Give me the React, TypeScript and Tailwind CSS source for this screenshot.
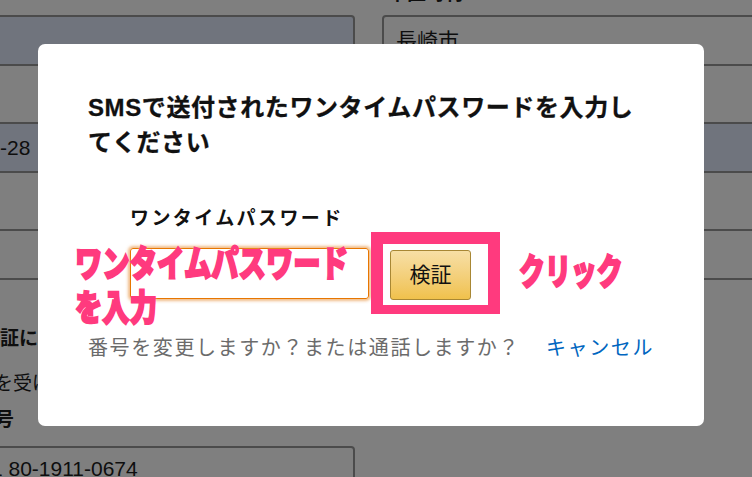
import React from 'react';

const font = '[font-family:"Liberation_Sans","Noto_Sans_CJK_JP",sans-serif]';

const Field = ({ fill, text, pad }: { fill: string; text?: string; pad?: string }) => (
  <div className={`h-[51px] border-2 border-[#4b4b4b] rounded-[4px] flex items-center text-[21px] text-[#0e0e0e] ${fill} ${pad ?? ''}`}>
    {text}
  </div>
);

export default function App() {
  return (
    <div className={`relative w-[752px] h-[477px] overflow-hidden bg-[#7f7f7f] ${font}`}>
      {/* page behind the overlay */}
      <div className="flex">
        <div className="-ml-[40px] w-[395px] shrink-0 flex flex-col">
          <div className="h-[15px]" />
          <Field fill="bg-[#70747d]" />
          <div className="h-[56px]" />
          <Field fill="bg-[#70747d]" text="-28" pad="pl-[38px]" />
          <div className="h-[56px]" />
          <Field fill="bg-[#7f7f7f]" />
          <div className="mt-[46px] pl-[21px] text-[19px] font-bold leading-[26px] text-[#0e0e0e] whitespace-nowrap">
            認証に使用する電話番号
          </div>
          <div className="mt-[19px] pl-[34px] text-[19px] leading-[26px] text-[#0e0e0e] whitespace-nowrap">
            を受け取る電話番号
          </div>
          <div className="mt-[10px] pl-[16px] text-[19px] font-bold leading-[26px] text-[#0e0e0e] whitespace-nowrap">
            番号
          </div>
          <div className="mt-[13px] h-[51px] border-2 border-[#4b4b4b] rounded-[4px] pl-[5px] pt-[8px] text-[21px] leading-[26px] text-[#0e0e0e] whitespace-nowrap">
            +81 80-1911-0674
          </div>
        </div>
        <div className="ml-[27px] w-[420px] shrink-0 flex flex-col">
          <div className="h-[15px] -mt-[16px] pb-[16px] pl-[6px] text-[19px] font-bold leading-[20px] text-[#0e0e0e] box-content">
            市区町村
          </div>
          <Field fill="bg-[#7f7f7f]" text="長崎市" pad="pl-[12px] text-[20px]" />
          <div className="h-[56px]" />
          <Field fill="bg-[#70747d]" />
          <div className="h-[56px]" />
          <Field fill="bg-[#7f7f7f]" />
        </div>
      </div>

      {/* dialog */}
      <div className="absolute left-[38px] top-[44px] w-[666px] h-[382px] rounded-[7px] bg-white px-[50px] pt-[46px]">
        <h2 className="text-[24px] font-bold leading-[35px] tracking-[0.6px] text-[#111] [-webkit-text-stroke:0.3px_#111]">
          SMSで送付されたワンタイムパスワードを入力し
          <br />
          てください
        </h2>
        <div className="mt-[47px] ml-[42px] text-[19px] font-bold leading-[24px] tracking-[2.4px] text-[#111]">
          ワンタイムパスワード
        </div>
        <div className="mt-[1px] ml-[42px] flex items-center">
          <div className="w-[239px] h-[51px] shrink-0 rounded-[3px] border border-[#e77600] shadow-[0_0_3px_2px_rgba(228,121,17,0.5)]" />
          <div className="ml-[2px] shrink-0 border-x-[12px] border-t-[12px] border-b-[9px] border-[#ff3a7e] bg-white pl-[7px] pr-[17px] pt-[6px] pb-[5px]">
            <button className="w-[81px] h-[50px] rounded-[3px] border border-[#a88734] bg-gradient-to-b from-[#f7dfa5] to-[#f0c14b] text-[21px] text-[#111]">
              検証
            </button>
          </div>
          <div className="ml-[19px] origin-left scale-x-[0.72] whitespace-nowrap text-[36px] font-black leading-[40px] text-[#ff3a7e] [-webkit-text-stroke:2px_#ff3a7e]">
            クリック
          </div>
        </div>
        <div className="mt-[20px] flex items-center whitespace-nowrap text-[20px] leading-[28px] tracking-[1.6px]">
          <span className="text-[#6b6b6b]">番号を変更しますか？または通話しますか？</span>
          <span className="ml-[26px] text-[#0066c0]">キャンセル</span>
        </div>

        {/* annotation over the input */}
        <div className="absolute left-[37px] top-[199px] origin-left scale-x-[0.76] whitespace-nowrap text-[36px] font-black leading-[44px] text-[#ff3a7e] [-webkit-text-stroke:2px_#ff3a7e] [text-shadow:0_0_3px_#fff]">
          ワンタイムパスワード
          <br />
          を入力
        </div>
      </div>
    </div>
  );
}
